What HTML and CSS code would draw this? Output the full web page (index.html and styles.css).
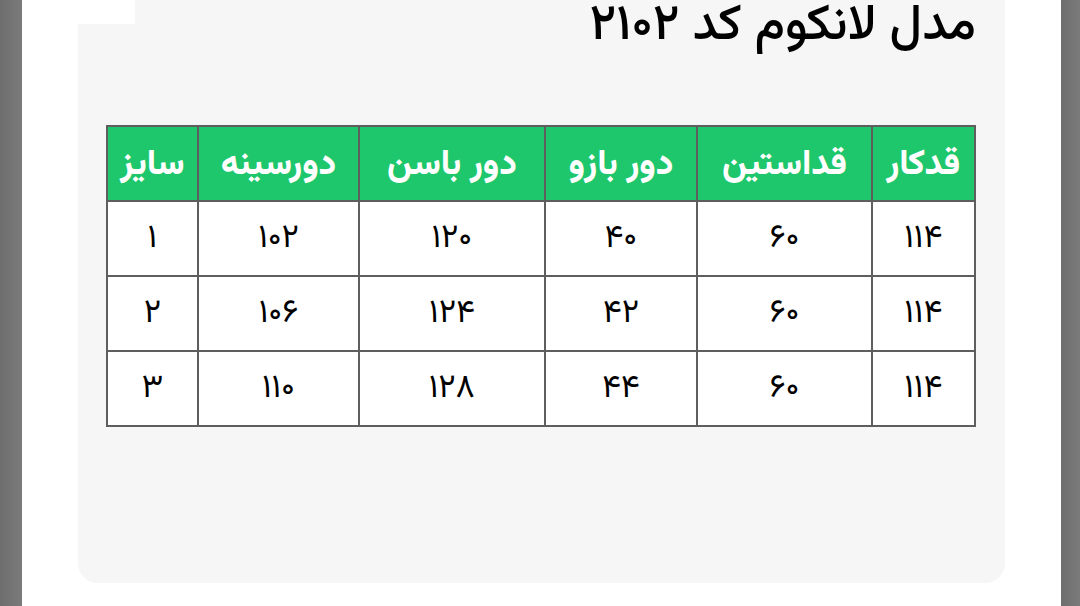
FILE: index.html
```html
<!DOCTYPE html>
<html lang="fa">
<head>
<meta charset="utf-8">
<title>مدل لانکوم کد ۲۱۰۲</title>
<link rel="stylesheet" href="styles.css">
</head>
<body>
<div class="frame">
  <div class="edge edge-left"></div>
  <main class="page">
    <section class="card" dir="rtl">
      <h1 class="title">مدل لانکوم کد ۲۱۰۲</h1>
      <table class="sizes">
        <thead>
          <tr>
            <th class="c1">قدکار</th>
            <th class="c2">قداستین</th>
            <th class="c3">دور بازو</th>
            <th class="c4">دور باسن</th>
            <th class="c5">دورسینه</th>
            <th class="c6">سایز</th>
          </tr>
        </thead>
        <tbody>
          <tr><td>۱۱۴</td><td>۶۰</td><td>۴۰</td><td>۱۲۰</td><td>۱۰۲</td><td>۱</td></tr>
          <tr><td>۱۱۴</td><td>۶۰</td><td>۴۲</td><td>۱۲۴</td><td>۱۰۶</td><td>۲</td></tr>
          <tr><td>۱۱۴</td><td>۶۰</td><td>۴۴</td><td>۱۲۸</td><td>۱۱۰</td><td>۳</td></tr>
        </tbody>
      </table>
    </section>
    <div class="tab-cover"></div>
  </main>
  <div class="edge edge-right"></div>
</div>
</body>
</html>
```
FILE: styles.css
```css
html, body {
  margin: 0;
  padding: 0;
  height: 100%;
  overflow: hidden;
  background: #ffffff;
}
body {
  font-family: "Vazirmatn", "Noto Sans Arabic", "DejaVu Sans", sans-serif;
}
.frame {
  display: flex;
  flex-direction: row;
  height: 606px;
}
.edge {
  background: linear-gradient(to right, #6e6e6e, #7a7a7a);
  flex: none;
}
.edge-left { width: 22px; }
.edge-right { width: 19px; }
.page {
  flex: 1;
  position: relative;
  background: #ffffff;
  padding: 0 56px;
}
.card {
  background: #f6f6f6;
  width: 927px;
  height: 583px;
  box-sizing: border-box;
  padding: 0 29px 0 29px;
  border-radius: 0 0 20px 20px;
  display: flex;
  flex-direction: column;
}
.title {
  margin: -5px 0 0 0;
  font-size: 50px;
  font-weight: 500;
  line-height: 64px;
  height: 64px;
  color: #000;
  text-align: right;
  white-space: nowrap;
}
.sizes {
  margin-top: 66px;
  width: 870px;
  border-collapse: collapse;
  background: #ffffff;
  table-layout: fixed;
}
.sizes th, .sizes td {
  border: 2px solid #5e5e5e;
  height: 73px;
  padding: 0;
  text-align: center;
  vertical-align: middle;
}
.sizes th {
  background: #1ec76b;
  color: #ffffff;
  font-size: 35px;
  font-weight: 800;
  height: 70px;
  padding-top: 3px;
}
.sizes td {
  color: #000;
  font-size: 33px;
}
.c1 { width: 11.85%; }
.c2 { width: 20.14%; }
.c3 { width: 17.6%; }
.c4 { width: 21.4%; }
.c5 { width: 18.65%; }
.c6 { width: 10.36%; }
.tab-cover {
  position: absolute;
  top: 0;
  left: 0;
  width: 113px;
  height: 24px;
  background: #ffffff;
}
```
